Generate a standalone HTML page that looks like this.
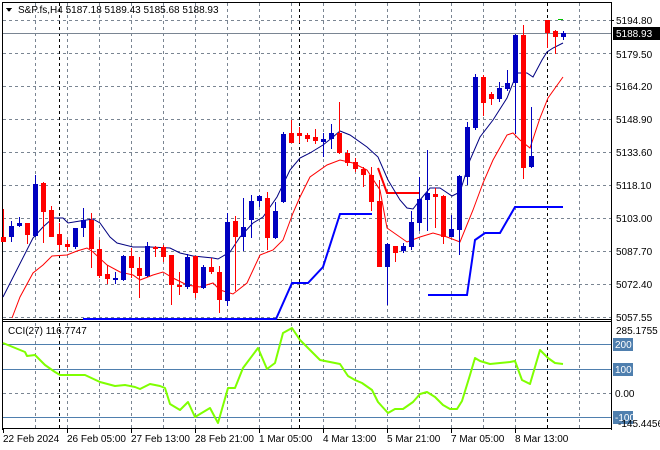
<!DOCTYPE html>
<html><head><meta charset="utf-8"><style>
html,body{margin:0;padding:0;background:#fff;width:660px;height:450px;overflow:hidden}
svg{display:block}
text{font-family:"Liberation Sans",sans-serif;font-size:10px;fill:#000}
.r{fill:#ff0000}.b{fill:#0000c0}
</style></head><body>
<svg width="660" height="450" viewBox="0 0 660 450" shape-rendering="crispEdges">
<rect width="660" height="450" fill="#fff"/>
<g stroke="#7a8592" stroke-dasharray="3,3" stroke-width="1">
<line x1="3" y1="20.5" x2="611" y2="20.5"/><line x1="3" y1="53.5" x2="611" y2="53.5"/><line x1="3" y1="86.5" x2="611" y2="86.5"/><line x1="3" y1="119.5" x2="611" y2="119.5"/><line x1="3" y1="152.5" x2="611" y2="152.5"/><line x1="3" y1="185.5" x2="611" y2="185.5"/><line x1="3" y1="218.5" x2="611" y2="218.5"/><line x1="3" y1="251.5" x2="611" y2="251.5"/><line x1="3" y1="284.5" x2="611" y2="284.5"/><line x1="3" y1="317.5" x2="611" y2="317.5"/>
<line x1="35.5" y1="3" x2="35.5" y2="320"/><line x1="67.5" y1="3" x2="67.5" y2="320"/><line x1="99.5" y1="3" x2="99.5" y2="320"/><line x1="131.5" y1="3" x2="131.5" y2="320"/><line x1="163.5" y1="3" x2="163.5" y2="320"/><line x1="195.5" y1="3" x2="195.5" y2="320"/><line x1="227.5" y1="3" x2="227.5" y2="320"/><line x1="259.5" y1="3" x2="259.5" y2="320"/><line x1="291.5" y1="3" x2="291.5" y2="320"/><line x1="323.5" y1="3" x2="323.5" y2="320"/><line x1="355.5" y1="3" x2="355.5" y2="320"/><line x1="387.5" y1="3" x2="387.5" y2="320"/><line x1="419.5" y1="3" x2="419.5" y2="320"/><line x1="451.5" y1="3" x2="451.5" y2="320"/><line x1="483.5" y1="3" x2="483.5" y2="320"/><line x1="515.5" y1="3" x2="515.5" y2="320"/><line x1="579.5" y1="3" x2="579.5" y2="320"/>
<line x1="3" y1="393.5" x2="611" y2="393.5"/>
<line x1="35.5" y1="323" x2="35.5" y2="428"/><line x1="67.5" y1="323" x2="67.5" y2="428"/><line x1="99.5" y1="323" x2="99.5" y2="428"/><line x1="131.5" y1="323" x2="131.5" y2="428"/><line x1="163.5" y1="323" x2="163.5" y2="428"/><line x1="195.5" y1="323" x2="195.5" y2="428"/><line x1="227.5" y1="323" x2="227.5" y2="428"/><line x1="259.5" y1="323" x2="259.5" y2="428"/><line x1="291.5" y1="323" x2="291.5" y2="428"/><line x1="323.5" y1="323" x2="323.5" y2="428"/><line x1="355.5" y1="323" x2="355.5" y2="428"/><line x1="387.5" y1="323" x2="387.5" y2="428"/><line x1="419.5" y1="323" x2="419.5" y2="428"/><line x1="451.5" y1="323" x2="451.5" y2="428"/><line x1="483.5" y1="323" x2="483.5" y2="428"/><line x1="515.5" y1="323" x2="515.5" y2="428"/><line x1="579.5" y1="323" x2="579.5" y2="428"/>
</g>
<g stroke="#000" stroke-dasharray="3,3">
<line x1="59.5" y1="3" x2="59.5" y2="320"/><line x1="299.5" y1="3" x2="299.5" y2="320"/><line x1="547.5" y1="3" x2="547.5" y2="320"/>
<line x1="59.5" y1="323" x2="59.5" y2="428"/><line x1="299.5" y1="323" x2="299.5" y2="428"/><line x1="547.5" y1="323" x2="547.5" y2="428"/>
</g>
<g stroke="#4f7fae"><line x1="3" y1="344.5" x2="611" y2="344.5"/><line x1="3" y1="369.5" x2="611" y2="369.5"/><line x1="3" y1="417.5" x2="611" y2="417.5"/></g>
<line x1="3" y1="33.5" x2="611" y2="33.5" stroke="#7a8592"/>
<g stroke="#000" fill="none">
<line x1="2.5" y1="2" x2="2.5" y2="430"/><line x1="611.5" y1="2" x2="611.5" y2="430"/>
<line x1="2" y1="2.5" x2="612" y2="2.5"/><line x1="2" y1="319.5" x2="612" y2="319.5"/><line x1="2" y1="321.5" x2="612" y2="321.5"/><line x1="2" y1="428.5" x2="612" y2="428.5"/>
</g>
<g shape-rendering="auto" fill="none">
<polyline stroke="#0000ff" stroke-width="2" points="83,319 276,319 292,283 308,283 323,267 340,214 372,214"/>
<polyline stroke="#0000ff" stroke-width="2" points="428,295 467,295 475,240 485,233 500,233 515,207 563,207"/>
<polyline stroke="#ff0000" stroke-width="2" points="378,168 387,193 419,193"/>
<polyline stroke="#000080" stroke-width="1" points="3,297 33,238 43,227 53,218 63,218 68,223 80,221 93,219 100,223 110,237 117,243 133,247 150,247 170,248 180,253 193,256 213,258 218,259 230,252 240,237 253,223 263,217 277,197 290,170 300,158 310,153 323,145 333,137 340,131 350,135 367,147 378,157 388,180 400,200 407,208 413,209 420,200 430,188 440,188 452,196 460,192 470,160 480,137 493,120 507,98 517,73 527,73 533,77 542,60 547,52 553,48 563,43"/>
<polyline stroke="#ff0000" stroke-width="1" points="12,318 20,297 33,273 43,265 52,256 67,255 77,251 87,248 93,252 107,265 120,272 133,275 140,280 153,275 163,272 173,278 187,285 200,287 213,283 220,290 233,294 247,283 260,255 273,250 283,240 293,213 300,197 310,177 327,165 340,160 353,163 367,170 380,190 387,228 407,242 420,237 433,233 447,237 460,242 473,210 483,183 493,160 507,135 513,133 520,140 530,148 540,118 548,98 563,77"/>
<polyline stroke="#7fff00" stroke-width="2" stroke-linejoin="round" points="3,343 25,352 27,356 35,355 45,365 55,372 60,375 85,375 100,382 115,386 125,385 135,387 140,389 150,384 160,386 165,388 170,404 180,410 188,402 195,417 210,408 218,423 228,388 235,388 243,368 258,348 267,369 275,363 283,333 292,328 300,340 310,350 320,360 330,362 340,364 348,376 355,380 362,383 372,390 378,402 388,413 395,409 403,409 413,402 420,394 427,392 435,397 443,405 450,409 457,409 462,401 470,375 475,358 480,361 490,364 500,363 510,362 515,361 522,380 530,384 540,350 548,358 555,363 563,364"/>
</g>
<!-- candles -->
<g>
<rect class="r" x="3" y="209" width="1" height="33"/><rect class="r" x="1" y="237" width="5" height="5"/>
<rect class="b" x="11" y="221" width="1" height="21"/><rect class="b" x="9" y="226" width="5" height="11"/>
<rect class="b" x="19" y="217" width="1" height="10"/><rect class="b" x="17" y="223" width="5" height="3"/>
<rect class="r" x="27" y="223" width="1" height="21"/><rect class="r" x="25" y="223" width="5" height="12"/>
<rect class="b" x="35" y="175" width="1" height="62"/><rect class="b" x="33" y="184" width="5" height="52"/>
<rect class="r" x="43" y="182" width="1" height="61"/><rect class="r" x="41" y="183" width="5" height="29"/>
<rect class="r" x="51" y="206" width="1" height="31"/><rect class="r" x="49" y="210" width="5" height="27"/>
<rect class="r" x="59" y="223" width="1" height="27"/><rect class="r" x="57" y="234" width="5" height="11"/>
<rect class="r" x="67" y="240" width="1" height="11"/><rect class="r" x="65" y="244" width="5" height="3"/>
<rect class="b" x="75" y="228" width="1" height="21"/><rect class="b" x="73" y="228" width="5" height="19"/>
<rect class="b" x="83" y="208" width="1" height="29"/><rect class="b" x="81" y="220" width="5" height="8"/>
<rect class="r" x="91" y="213" width="1" height="55"/><rect class="r" x="89" y="220" width="5" height="29"/>
<rect class="r" x="99" y="240" width="1" height="38"/><rect class="r" x="97" y="249" width="5" height="27"/>
<rect class="r" x="107" y="265" width="1" height="19"/><rect class="r" x="105" y="274" width="5" height="5"/>
<rect class="b" x="115" y="272" width="1" height="12"/><rect class="b" x="113" y="278" width="5" height="2"/>
<rect class="b" x="123" y="255" width="1" height="26"/><rect class="b" x="121" y="256" width="5" height="24"/>
<rect class="r" x="131" y="248" width="1" height="30"/><rect class="r" x="129" y="256" width="5" height="12"/>
<rect class="r" x="139" y="257" width="1" height="41"/><rect class="r" x="137" y="268" width="5" height="8"/>
<rect class="b" x="147" y="242" width="1" height="35"/><rect class="b" x="145" y="246" width="5" height="30"/>
<rect class="r" x="155" y="246" width="1" height="11"/><rect class="r" x="153" y="247" width="5" height="2"/>
<rect class="r" x="163" y="245" width="1" height="17"/><rect class="r" x="161" y="247" width="5" height="10"/>
<rect class="r" x="171" y="255" width="1" height="50"/><rect class="r" x="169" y="255" width="5" height="30"/>
<rect class="r" x="179" y="272" width="1" height="23"/><rect class="r" x="177" y="285" width="5" height="2"/>
<rect class="b" x="187" y="254" width="1" height="35"/><rect class="b" x="185" y="257" width="5" height="30"/>
<rect class="r" x="195" y="256" width="1" height="42"/><rect class="r" x="193" y="256" width="5" height="37"/>
<rect class="b" x="203" y="265" width="1" height="24"/><rect class="b" x="201" y="267" width="5" height="21"/>
<rect class="r" x="211" y="258" width="1" height="16"/><rect class="r" x="209" y="267" width="5" height="5"/>
<rect class="r" x="219" y="266" width="1" height="47"/><rect class="r" x="217" y="272" width="5" height="28"/>
<rect class="b" x="227" y="213" width="1" height="93"/><rect class="b" x="225" y="222" width="5" height="79"/>
<rect class="r" x="235" y="216" width="1" height="75"/><rect class="r" x="233" y="221" width="5" height="16"/>
<rect class="b" x="243" y="198" width="1" height="53"/><rect class="b" x="241" y="227" width="5" height="10"/>
<rect class="b" x="251" y="195" width="1" height="43"/><rect class="b" x="249" y="201" width="5" height="19"/>
<rect class="b" x="259" y="195" width="1" height="12"/><rect class="b" x="257" y="196" width="5" height="5"/>
<rect class="r" x="267" y="192" width="1" height="58"/><rect class="r" x="265" y="198" width="5" height="40"/>
<rect class="b" x="275" y="202" width="1" height="37"/><rect class="b" x="273" y="211" width="5" height="27"/>
<rect class="b" x="283" y="132" width="1" height="71"/><rect class="b" x="281" y="134" width="5" height="68"/>
<rect class="r" x="291" y="120" width="1" height="23"/><rect class="r" x="289" y="133" width="5" height="10"/>
<rect class="r" x="299" y="127" width="1" height="16"/><rect class="r" x="297" y="133" width="5" height="3"/>
<rect class="r" x="307" y="133" width="1" height="9"/><rect class="r" x="305" y="135" width="5" height="4"/>
<rect class="r" x="315" y="129" width="1" height="15"/><rect class="r" x="313" y="137" width="5" height="4"/>
<rect class="b" x="323" y="133" width="1" height="24"/><rect class="b" x="321" y="139" width="5" height="3"/>
<rect class="b" x="331" y="124" width="1" height="25"/><rect class="b" x="329" y="133" width="5" height="6"/>
<rect class="r" x="339" y="102" width="1" height="52"/><rect class="r" x="337" y="133" width="5" height="20"/>
<rect class="r" x="347" y="150" width="1" height="16"/><rect class="r" x="345" y="153" width="5" height="10"/>
<rect class="r" x="355" y="158" width="1" height="14"/><rect class="r" x="353" y="162" width="5" height="7"/>
<rect class="r" x="363" y="167" width="1" height="20"/><rect class="r" x="361" y="169" width="5" height="6"/>
<rect class="r" x="371" y="167" width="1" height="44"/><rect class="r" x="369" y="175" width="5" height="27"/>
<rect class="r" x="379" y="180" width="1" height="87"/><rect class="r" x="377" y="201" width="5" height="66"/>
<rect class="b" x="387" y="243" width="1" height="62"/><rect class="b" x="385" y="244" width="5" height="23"/>
<rect class="r" x="395" y="246" width="1" height="16"/><rect class="r" x="393" y="246" width="5" height="7"/>
<rect class="b" x="403" y="243" width="1" height="10"/><rect class="b" x="401" y="246" width="5" height="5"/>
<rect class="b" x="411" y="211" width="1" height="39"/><rect class="b" x="409" y="222" width="5" height="25"/>
<rect class="b" x="419" y="177" width="1" height="54"/><rect class="b" x="417" y="199" width="5" height="24"/>
<rect class="b" x="427" y="150" width="1" height="81"/><rect class="b" x="425" y="193" width="5" height="7"/>
<rect class="r" x="435" y="188" width="1" height="40"/><rect class="r" x="433" y="194" width="5" height="3"/>
<rect class="r" x="443" y="195" width="1" height="49"/><rect class="r" x="441" y="196" width="5" height="41"/>
<rect class="b" x="451" y="215" width="1" height="22"/><rect class="b" x="449" y="229" width="5" height="8"/>
<rect class="b" x="459" y="175" width="1" height="80"/><rect class="b" x="457" y="176" width="5" height="54"/>
<rect class="b" x="467" y="122" width="1" height="63"/><rect class="b" x="465" y="127" width="5" height="50"/>
<rect class="b" x="475" y="74" width="1" height="56"/><rect class="b" x="473" y="77" width="5" height="51"/>
<rect class="r" x="483" y="75" width="1" height="41"/><rect class="r" x="481" y="77" width="5" height="26"/>
<rect class="r" x="491" y="92" width="1" height="13"/><rect class="r" x="489" y="94" width="5" height="5"/>
<rect class="b" x="499" y="82" width="1" height="20"/><rect class="b" x="497" y="88" width="5" height="11"/>
<rect class="b" x="507" y="70" width="1" height="21"/><rect class="b" x="505" y="83" width="5" height="6"/>
<rect class="b" x="515" y="34" width="1" height="100"/><rect class="b" x="513" y="35" width="5" height="48"/>
<rect class="r" x="523" y="25" width="1" height="154"/><rect class="r" x="521" y="35" width="5" height="133"/>
<rect class="b" x="531" y="107" width="1" height="61"/><rect class="b" x="529" y="156" width="5" height="11"/>
<rect class="r" x="547" y="20" width="1" height="28"/><rect class="r" x="545" y="20" width="5" height="13"/>
<rect class="r" x="555" y="30" width="1" height="24"/><rect class="r" x="553" y="31" width="5" height="6"/>
<rect class="b" x="563" y="31" width="1" height="9"/><rect class="b" x="561" y="33" width="5" height="4"/>
</g>
<g>
<text x="616" y="24">5194.80</text>
<rect x="613" y="27" width="47" height="13" fill="#000"/>
<text x="616" y="37" style="fill:#fff">5188.93</text>
<text x="616" y="58">5179.50</text>
<text x="616" y="90">5164.20</text>
<text x="616" y="123">5148.90</text>
<text x="616" y="156">5133.60</text>
<text x="616" y="189">5118.10</text>
<text x="616" y="222">5103.00</text>
<text x="616" y="255">5087.70</text>
<text x="616" y="288">5072.40</text>
<text x="616" y="321">5057.55</text>
<text x="616" y="334">285.1755</text>
<rect x="613" y="338" width="20" height="13" fill="#4f7fae"/><text x="615" y="348" style="fill:#fff">200</text>
<rect x="613" y="363" width="20" height="13" fill="#4f7fae"/><text x="615" y="373" style="fill:#fff">100</text>
<text x="615" y="397">0.00</text>
<rect x="613" y="411" width="20" height="13" fill="#4f7fae"/><text x="615" y="421" style="fill:#fff">-100</text>
<text x="618" y="427">-145.4456</text>
</g>
<g stroke="#000"><line x1="611" y1="20.5" x2="614" y2="20.5"/><line x1="3.5" y1="429" x2="3.5" y2="433"/><line x1="67.5" y1="429" x2="67.5" y2="433"/><line x1="131.5" y1="429" x2="131.5" y2="433"/><line x1="195.5" y1="429" x2="195.5" y2="433"/><line x1="259.5" y1="429" x2="259.5" y2="433"/><line x1="323.5" y1="429" x2="323.5" y2="433"/><line x1="387.5" y1="429" x2="387.5" y2="433"/><line x1="451.5" y1="429" x2="451.5" y2="433"/><line x1="515.5" y1="429" x2="515.5" y2="433"/></g>
<g>
<text x="3" y="442">22 Feb 2024</text>
<text x="67" y="442">26 Feb 05:00</text>
<text x="131" y="442">27 Feb 13:00</text>
<text x="195" y="442">28 Feb 21:00</text>
<text x="259" y="442">1 Mar 05:00</text>
<text x="323" y="442">4 Mar 13:00</text>
<text x="387" y="442">5 Mar 21:00</text>
<text x="451" y="442">7 Mar 05:00</text>
<text x="515" y="442">8 Mar 13:00</text>
</g>
<path d="M6 8 L12 8 L9 12 Z" fill="#000"/>
<text x="18" y="13">S&amp;P.fs,H4  5187.18 5189.43 5185.68 5188.93</text>
<text x="8" y="334">CCI(27) 116.7747</text>
<rect x="558" y="19" width="5" height="1" fill="#00c000"/>
</svg>
</body></html>
